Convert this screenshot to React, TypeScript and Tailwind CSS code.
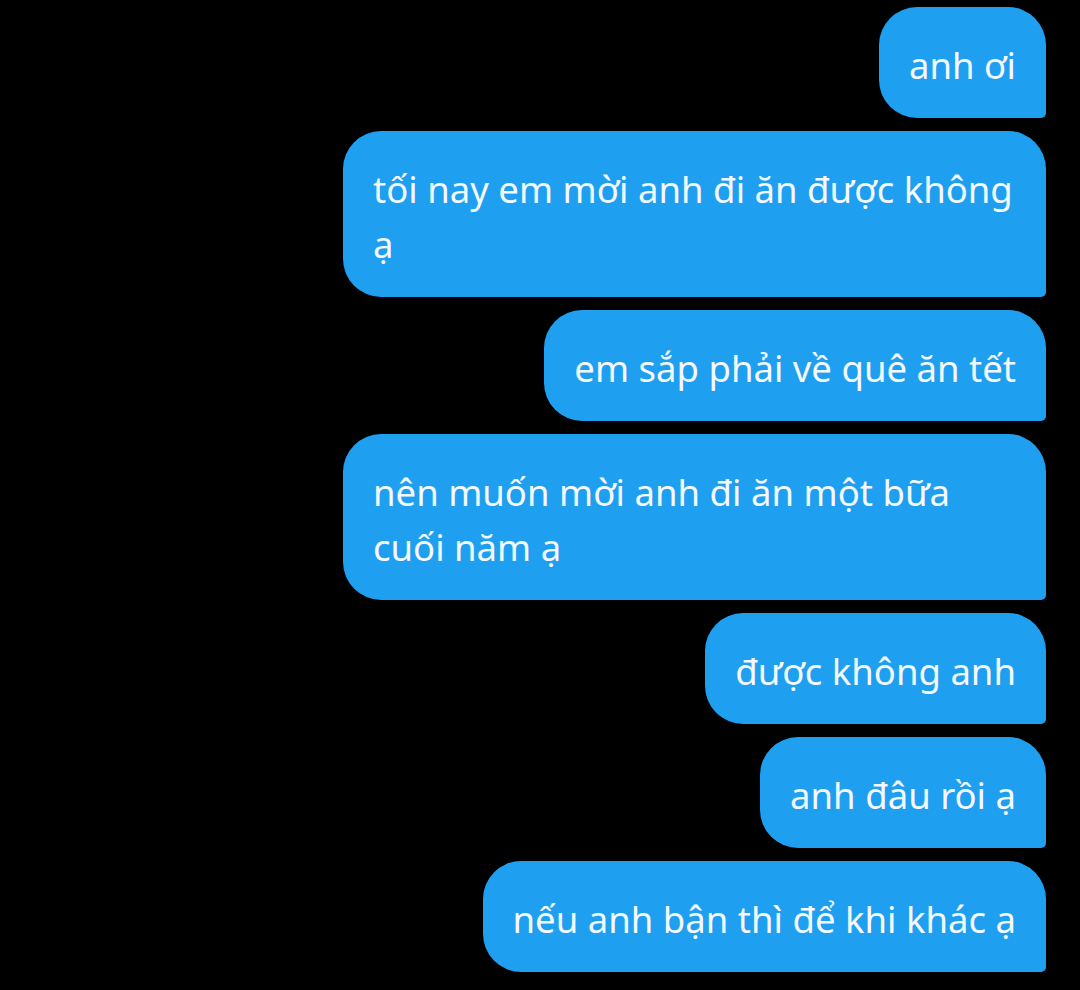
const messages = [
  "anh ơi",
  "tối nay em mời anh đi ăn được không ạ",
  "em sắp phải về quê ăn tết",
  "nên muốn mời anh đi ăn một bữa cuối năm ạ",
  "được không anh",
  "anh đâu rồi ạ",
  "nếu anh bận thì để khi khác ạ",
];

export default function App() {
  return (
    <div className="min-h-[990px] w-[1080px] bg-black pt-[7px] pr-[34px] flex flex-col items-end gap-[13px] font-['Noto_Sans',sans-serif]">
      {messages.map((m, i) => (
        <Bubble key={i} text={m} />
      ))}
    </div>
  );
}

function Bubble({ text }: { text: string }) {
  return (
    <div className="max-w-[703px] bg-[#1f9ff0] text-[#f4f9ff] text-[36.5px] leading-[55px] px-[30px] pt-[31px] pb-[25px] rounded-[38px] rounded-br-[5px]">
      {text}
    </div>
  );
}
